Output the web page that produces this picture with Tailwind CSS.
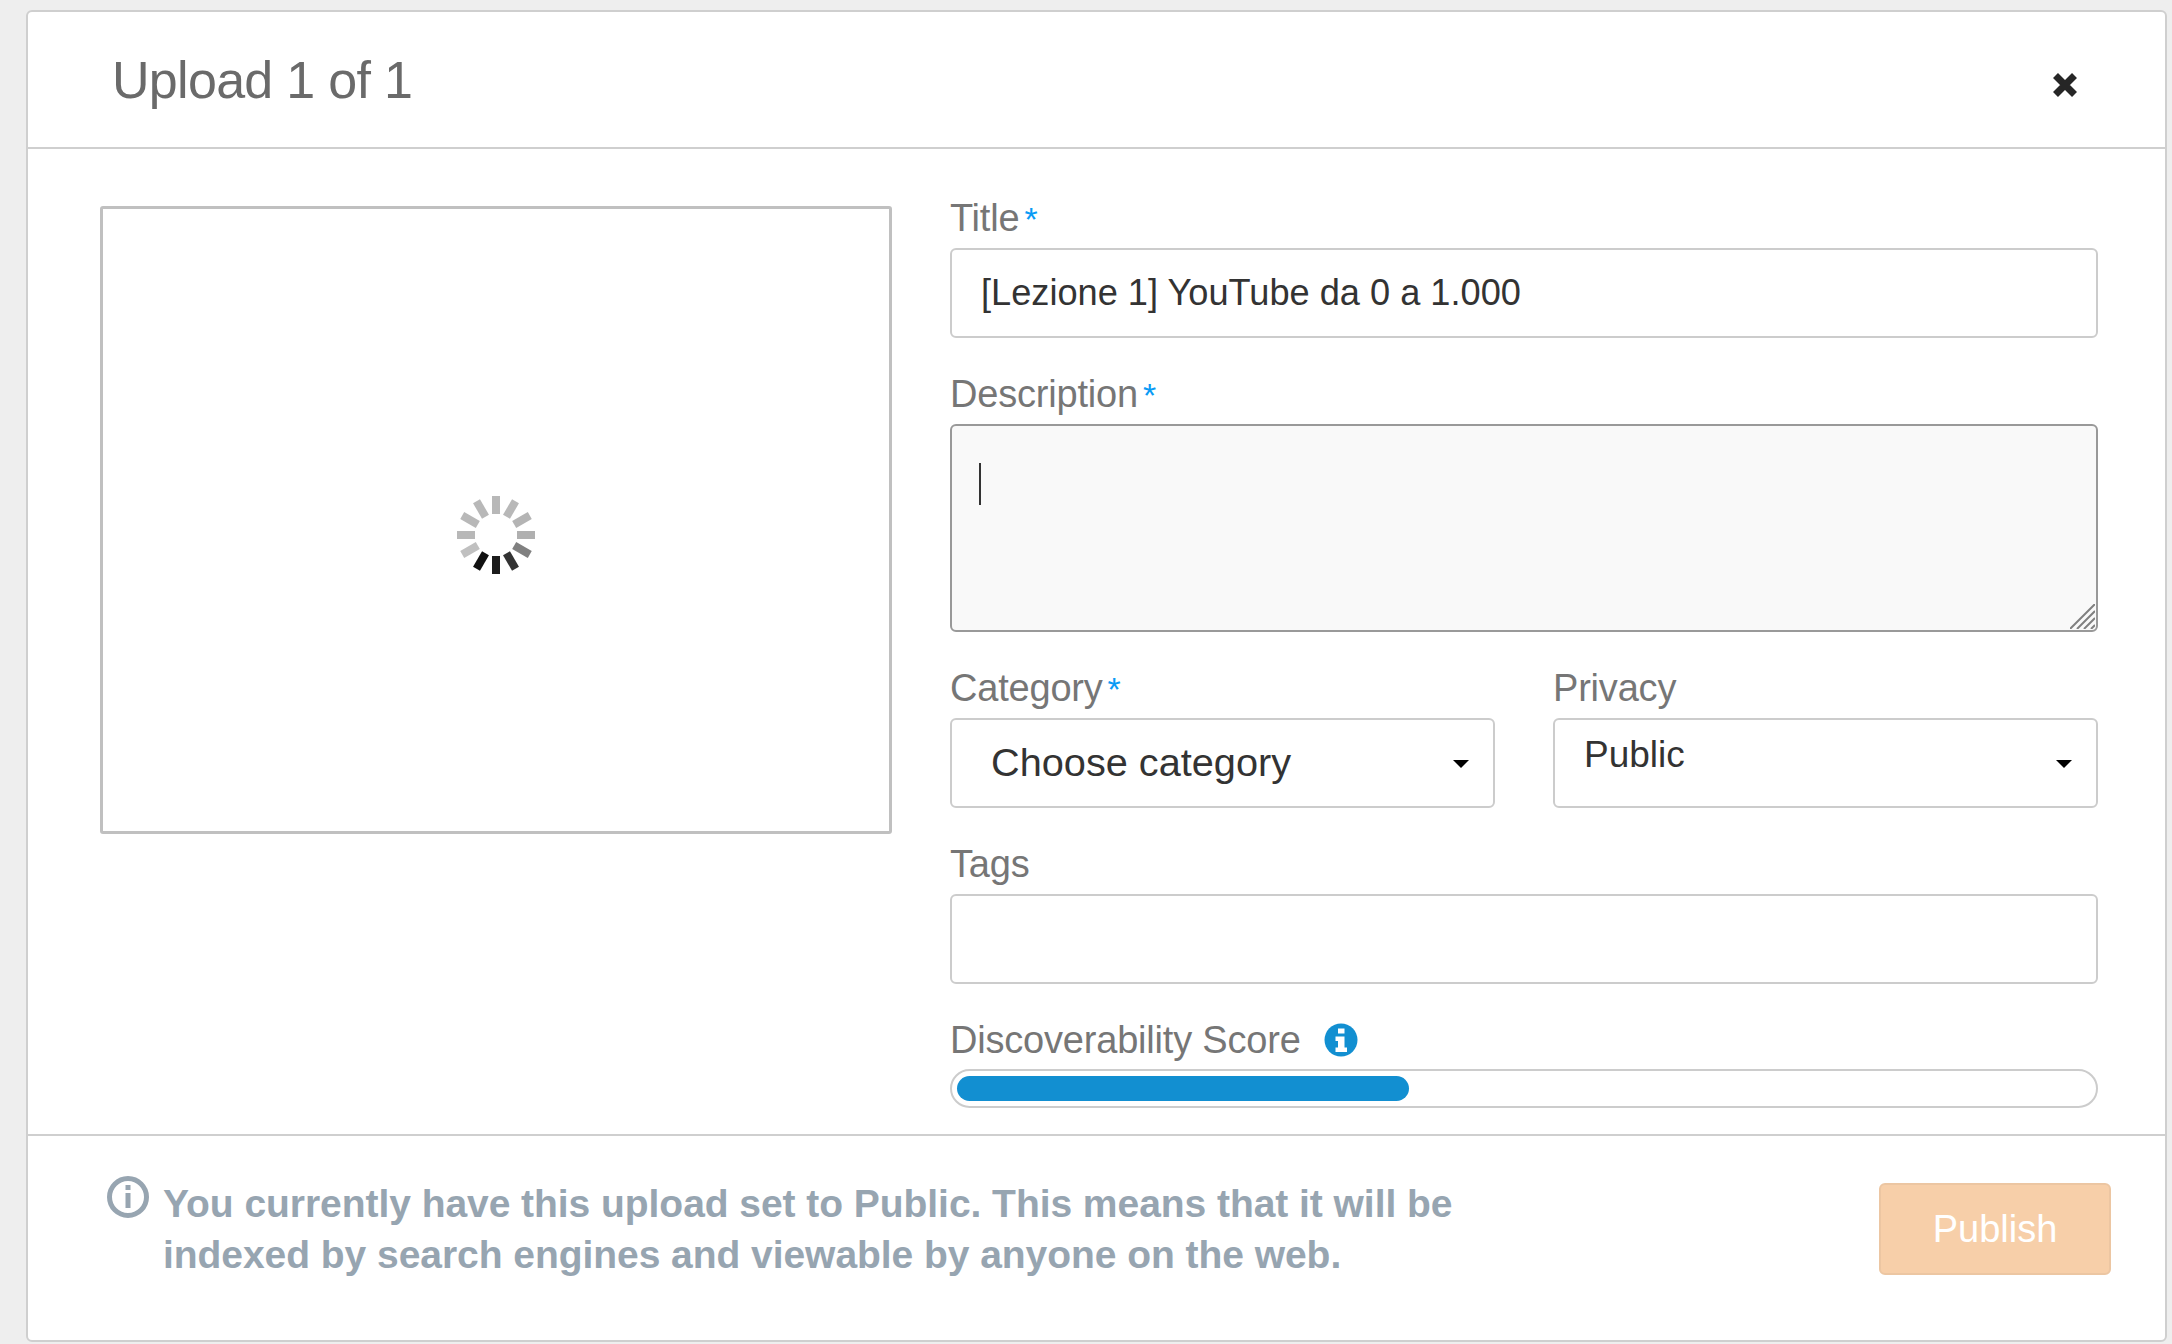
<!DOCTYPE html>
<html lang="en">
<head>
  <meta charset="UTF-8">
  <meta name="viewport" content="width=device-width,initial-scale=1">
  <title>Upload 1 of 1</title>
  <script src="https://cdn.jsdelivr.net/npm/@tailwindcss/browser@4"></script>
</head>
<body class="bg-[#eeeeee] h-screen overflow-hidden font-['Liberation_Sans',Arial,sans-serif]">
  <div class="pt-[10px] pl-[26px] pr-[5px] pb-[2px] h-full">
    <div class="h-full bg-white border-2 border-[#cfcfcf] rounded-md flex flex-col">

      <!-- header -->
      <div class="h-[137px] shrink-0 border-b-2 border-[#cfcfcf] flex justify-between pl-[84px] pr-[87px]">
        <h1 class="text-[52px] leading-none pt-[42px] tracking-[-0.7px] text-[#6a6a6a]">Upload 1 of 1</h1>
        <svg class="mt-[60px] w-[26px] h-[26px]" viewBox="0 0 26 26">
          <path d="M3.5 3.5 L22.5 22.5 M22.5 3.5 L3.5 22.5" stroke="#262626" stroke-width="7" fill="none"/>
        </svg>
      </div>

      <!-- body -->
      <div class="flex-1 flex pl-[72px] pr-[67px]">
        <div class="w-[792px] h-[628px] mt-[57px] border-[3px] border-[#c0c0c0] rounded-[3px] flex items-center justify-center shrink-0">
          <svg class="mt-[30px] w-[90px] h-[90px] blur-[0.6px]" viewBox="0 0 90 90">
            <g stroke-width="8" fill="none">
              <path d="M45 6 V24" stroke="#b8b8b8"/>
              <path d="M45 6 V24" stroke="#b8b8b8" transform="rotate(30 45 45)"/>
              <path d="M45 6 V24" stroke="#b4b4b4" transform="rotate(60 45 45)"/>
              <path d="M45 6 V24" stroke="#b0b0b0" transform="rotate(90 45 45)"/>
              <path d="M45 6 V24" stroke="#808080" transform="rotate(120 45 45)"/>
              <path d="M45 6 V24" stroke="#333333" transform="rotate(150 45 45)"/>
              <path d="M45 6 V24" stroke="#1c1c1c" transform="rotate(180 45 45)"/>
              <path d="M45 6 V24" stroke="#111111" transform="rotate(210 45 45)"/>
              <path d="M45 6 V24" stroke="#c0c0c0" transform="rotate(240 45 45)"/>
              <path d="M45 6 V24" stroke="#b8b8b8" transform="rotate(270 45 45)"/>
              <path d="M45 6 V24" stroke="#b8b8b8" transform="rotate(300 45 45)"/>
              <path d="M45 6 V24" stroke="#b8b8b8" transform="rotate(330 45 45)"/>
            </g>
          </svg>
        </div>

        <div class="flex-1 ml-[58px] pt-[48px] text-[38px] tracking-[-0.2px] text-[#767676]">
          <div class="h-[51px] leading-[43px]">Title<span class="text-[#0a9bf5] text-[34px] ml-[5px]">*</span></div>
          <input value="[Lezione 1] YouTube da 0 a 1.000" class="block w-full h-[90px] border-2 border-[#cccccc] rounded-md px-[29px] text-[36.2px] tracking-normal text-[#333333] outline-none">

          <div class="h-[51px] leading-[43px] mt-[35px]">Description<span class="text-[#0a9bf5] text-[34px] ml-[5px]">*</span></div>
          <div class="relative h-[208px]">
            <textarea class="block w-full h-full border-2 border-[#999999] rounded-md bg-[#f9f9f9] outline-none resize-none"></textarea>
            <div class="absolute left-[29px] top-[39px] w-[2px] h-[42px] bg-[#333333]"></div>
            <svg class="absolute right-[3px] bottom-[3px] w-[25px] h-[25px]" viewBox="0 0 25 25">
              <path d="M0 25 L25 0 M7 25 L25 7 M14 25 L25 14 M21 25 L25 21" stroke="#808080" stroke-width="2" fill="none"/>
            </svg>
          </div>

          <div class="grid grid-cols-2 gap-x-[58px] mt-[35px]">
            <div>
              <div class="h-[51px] leading-[43px]">Category<span class="text-[#0a9bf5] text-[34px] ml-[5px]">*</span></div>
              <div class="relative h-[90px] border-2 border-[#cccccc] rounded-md flex items-center pl-[39px] text-[39.7px] tracking-normal text-[#333333]">
                Choose category
                <div class="absolute right-[24px] top-[40px] w-0 h-0 border-x-[8px] border-x-transparent border-t-[8px] border-t-black"></div>
              </div>
            </div>
            <div>
              <div class="h-[51px] leading-[43px]">Privacy</div>
              <div class="relative h-[90px] border-2 border-[#cccccc] rounded-md pl-[29px] pt-[15px] leading-[40px] text-[37px] tracking-normal text-[#333333]">
                Public
                <div class="absolute right-[24px] top-[40px] w-0 h-0 border-x-[8px] border-x-transparent border-t-[8px] border-t-black"></div>
              </div>
            </div>
          </div>

          <div class="h-[51px] leading-[43px] mt-[35px]">Tags</div>
          <input class="block w-full h-[90px] border-2 border-[#cccccc] rounded-md outline-none">

          <div class="h-[50px] mt-[35px] flex items-start leading-[43px]">
            Discoverability Score
            <svg class="ml-[23px] mt-[4px] w-[34px] h-[34px]" viewBox="0 0 34 34">
              <circle cx="17" cy="17" r="16.5" fill="#128fd1"/>
              <path d="M14 5.5h6.5v5H14z M11.5 13.5h9v11h2.5v4.5H11.5v-4.5h2.5v-6.500h-2.500z" fill="#ffffff"/>
            </svg>
          </div>
          <div class="h-[39px] border-2 border-[#cccccc] rounded-full p-[5px]">
            <div class="h-[25px] w-[452px] rounded-full bg-[#128fd1]"></div>
          </div>
        </div>
      </div>

      <!-- footer -->
      <div class="h-[206px] shrink-0 border-t-2 border-[#cfcfcf] flex justify-between pl-[79px] pr-[54px]">
        <div class="flex items-start pt-[40px]">
          <svg class="w-[42px] h-[42px] shrink-0" viewBox="0 0 42 42">
            <circle cx="21" cy="21" r="18.500" fill="none" stroke="#97a5b1" stroke-width="5"/>
            <path d="M18.500 9h5v5h-5z M18.500 17h5v15h-5z" fill="#97a5b1"/>
          </svg>
          <p class="ml-[14px] mt-[2px] text-[39px] leading-[51px] tracking-[-0.05px] font-bold text-[#97a5b1]">You currently have this upload set to Public. This means that it will be<br>indexed by search engines and viewable by anyone on the web.</p>
        </div>
        <button class="mt-[47px] w-[232px] h-[92px] rounded-md border-2 border-[#ecc6a2] bg-[#f7cfa9] text-[38px] text-white">Publish</button>
      </div>
    </div>
  </div>
</body>
</html>
